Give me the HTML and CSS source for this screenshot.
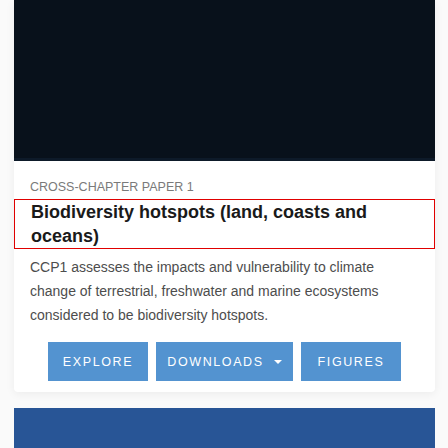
FILE: index.html
```html
<!DOCTYPE html>
<html>
<head>
<meta charset="utf-8">
<link rel="stylesheet" href="styles.css">
</head>
<body>
<div class="page">
  <div class="card">
    <div class="hero"></div>
    <div class="kicker">CROSS-CHAPTER PAPER 1</div>
    <h1 class="title">Biodiversity hotspots (land, coasts and oceans)</h1>
    <p class="desc">CCP1 assesses the impacts and vulnerability to climate change of terrestrial, freshwater and marine ecosystems considered to be biodiversity hotspots.</p>
    <div class="actions">
      <a class="btn btn-explore">EXPLORE</a>
      <a class="btn btn-downloads">DOWNLOADS <span class="caret"></span></a>
      <a class="btn btn-figures">FIGURES</a>
    </div>
  </div>
  <div class="next"></div>
</div>
</body>
</html>
```

FILE: styles.css
```css
html, body {
  margin: 0;
  padding: 0;
  background: #fafafa;
}
.page {
  padding: 0 13px 0 14px;
  display: flex;
  flex-direction: column;
  gap: 16px;
}
.card {
  background: #fff;
  border-radius: 0 0 4px 4px;
  box-shadow: 0 2px 10px rgba(0,0,0,0.06);
  padding-bottom: 11px;
}
.hero {
  height: 158px;
  background: #08111b;
  border-bottom: 3px solid #0d1a29;
}
.kicker {
  font-family: "Liberation Sans", Arial, sans-serif;
  font-size: 12.5px;
  line-height: 16px;
  color: #7a7a7a;
  padding: 0 16px;
  margin-top: 18px;
  margin-bottom: 4px;
}
.title {
  margin: 0;
  font-family: "Liberation Sans", Arial, sans-serif;
  font-weight: 700;
  font-size: 18px;
  line-height: 24px;
  color: #1a1a1a;
  padding: 0 16px;
  border: 1px solid #e00000;
}
.desc {
  margin: 6px 0 0;
  font-family: "Liberation Sans", Arial, sans-serif;
  font-size: 14px;
  line-height: 24px;
  color: #4d4d4d;
  padding: 0 16px;
}
.actions {
  display: flex;
  justify-content: center;
  gap: 8px;
  margin-top: 15px;
}
.btn {
  display: flex;
  align-items: center;
  justify-content: center;
  height: 39px;
  background: #5393d0;
  color: #fff;
  font-family: "Liberation Sans", Arial, sans-serif;
  font-size: 12.5px;
  letter-spacing: 1.6px;
  text-decoration: none;
}
.btn-explore, .btn-figures { width: 100px; }
.btn-downloads { width: 137px; gap: 6px; }
.caret {
  width: 0;
  height: 0;
  border-left: 4px solid transparent;
  border-right: 4px solid transparent;
  border-top: 4px solid #fff;
  margin-left: 4px;
}
.next {
  height: 60px;
  background: #285596;
}
```
